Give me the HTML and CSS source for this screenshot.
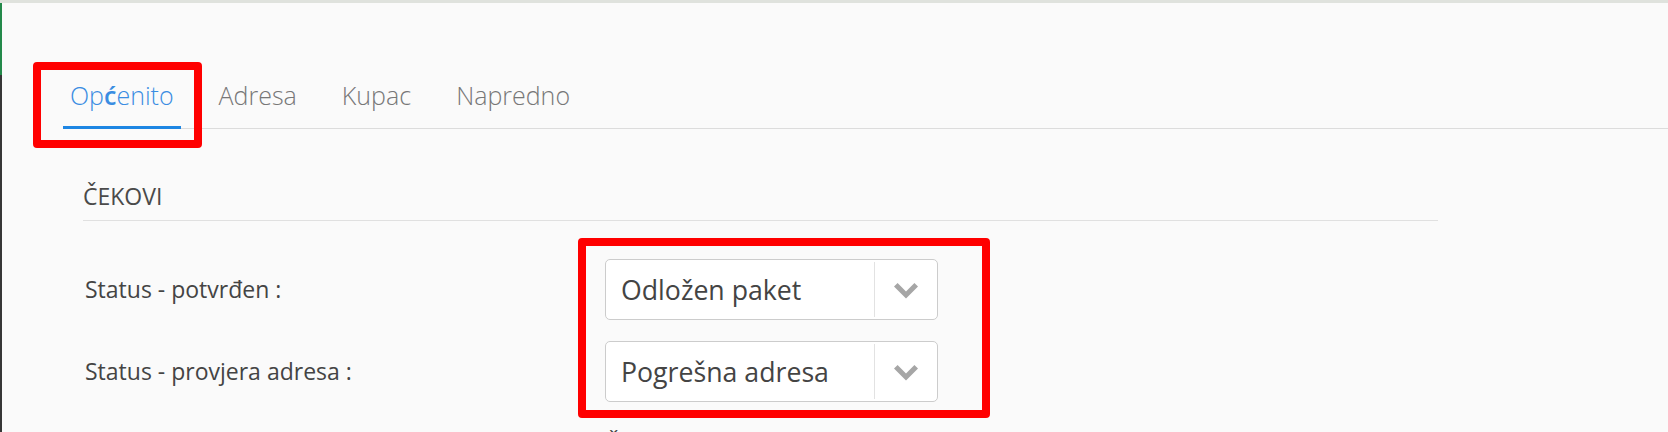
FILE: index.html
```html
<!DOCTYPE html>
<html lang="hr">
<head>
<meta charset="utf-8">
<title>Postavke</title>
<link rel="stylesheet" href="styles.css">
</head>
<body>
  <div class="topbar"></div>
  <div class="page">
    <aside class="edge">
      <span class="edge-top"></span>
      <span class="edge-rest"></span>
    </aside>
    <main class="main">
      <nav class="tabs">
        <ul class="tab-list">
          <li class="tab tab-active">
            <a class="tab-link" href="#">Op<span class="glyph-fallback">ć</span>enito</a>
            <span class="annot annot-tab"></span>
          </li>
          <li class="tab"><a class="tab-link" href="#">Adresa</a></li>
          <li class="tab"><a class="tab-link" href="#">Kupac</a></li>
          <li class="tab"><a class="tab-link" href="#">Napredno</a></li>
        </ul>
      </nav>
      <section class="section">
        <h2 class="section-title">ČEKOVI</h2>
        <div class="form-grid">
          <label class="form-label">Status - potvrđen :</label>
          <div class="select">
            <span class="select-value">Odložen paket</span>
            <span class="select-arrow">
              <svg class="chevron" width="24" height="16" viewBox="0 0 24 16"><polygon points="0,3.6 3.6,0 12,8.4 20.4,0 24,3.6 12,15.6" fill="#a6a6a6"/></svg>
            </span>
          </div>
          <label class="form-label">Status - provjera adresa :</label>
          <div class="select">
            <span class="select-value">Pogrešna adresa</span>
            <span class="select-arrow">
              <svg class="chevron" width="24" height="16" viewBox="0 0 24 16"><polygon points="0,3.6 3.6,0 12,8.4 20.4,0 24,3.6 12,15.6" fill="#a6a6a6"/></svg>
            </span>
          </div>
          <span class="form-label"></span>
          <p class="form-note">Čuvaj sve narudžbe na čekanju</p>
          <span class="annot annot-selects"></span>
        </div>
      </section>
    </main>
  </div>
</body>
</html>
```
FILE: styles.css
```css
* {
  box-sizing: border-box;
}

html, body {
  margin: 0;
  padding: 0;
  height: 100%;
}

body {
  background: #fafafa;
  font-family: "Open Sans", "Noto Sans", "DejaVu Sans", sans-serif;
  color: #444;
  overflow: hidden;
}

.topbar {
  height: 3px;
  background: #dfe2dd;
}

.page {
  display: flex;
  min-height: calc(100vh - 3px);
}

.edge {
  width: 2px;
  display: flex;
  flex-direction: column;
  flex-shrink: 0;
}

.edge-top {
  height: 72px;
  background: #23894a;
}

.edge-rest {
  flex: 1;
  background: #363636;
}

.main {
  flex: 1;
  min-width: 0;
}

.tabs {
  padding-top: 76px;
}

.tab-list {
  display: flex;
  gap: 31px;
  margin: 0 0 0 61px;
  padding: 0;
  list-style: none;
  border-bottom: 1px solid #dcdcdc;
}

.tab {
  position: relative;
  margin-bottom: -1px;
}

.tab-link {
  display: block;
  padding: 0 7px 15px;
  line-height: 32px;
  font-size: 25px;
  font-weight: 300;
  color: #777;
  text-decoration: none;
  border-bottom: 3px solid transparent;
}

.tab-active .tab-link {
  color: #3a8de2;
  border-bottom-color: #1e86e3;
}

.glyph-fallback {
  font-weight: 600;
}

.annot {
  position: absolute;
  border: 8px solid #ff0000;
  border-radius: 4px;
  pointer-events: none;
}

.annot-tab {
  left: -30px;
  top: -17px;
  width: 169px;
  height: 86px;
}

.section {
  width: 1355px;
  margin-left: 81px;
}

.section-title {
  margin: 52px 0 0;
  padding: 0 0 9px;
  font-size: 23px;
  line-height: 30px;
  font-weight: 400;
  color: #4a4a4a;
  border-bottom: 1px solid #e0e0e0;
}

.form-grid {
  position: relative;
  display: grid;
  grid-template-columns: 522px 333px;
  row-gap: 21px;
  align-items: center;
  margin-top: 38px;
}

.form-label {
  padding-left: 2px;
  font-size: 23px;
  line-height: 31px;
  color: #444;
}

.select {
  display: flex;
  height: 61px;
  background: #fff;
  border: 1px solid #cccccc;
  border-radius: 5px;
}

.select-value {
  flex: 1;
  display: flex;
  align-items: center;
  padding-left: 15px;
  font-size: 26.7px;
  color: #444;
}

.select-arrow {
  width: 63px;
  margin: 2px 0;
  display: flex;
  align-items: center;
  justify-content: center;
  border-left: 1px solid #e2e2e2;
}

.chevron {
  display: block;
  margin-top: 2px;
}

.form-note {
  margin: 6px 0 0;
  font-size: 23px;
  line-height: 31px;
  color: #444;
}

.annot-selects {
  left: 495px;
  top: -21px;
  width: 412px;
  height: 180px;
}
```
